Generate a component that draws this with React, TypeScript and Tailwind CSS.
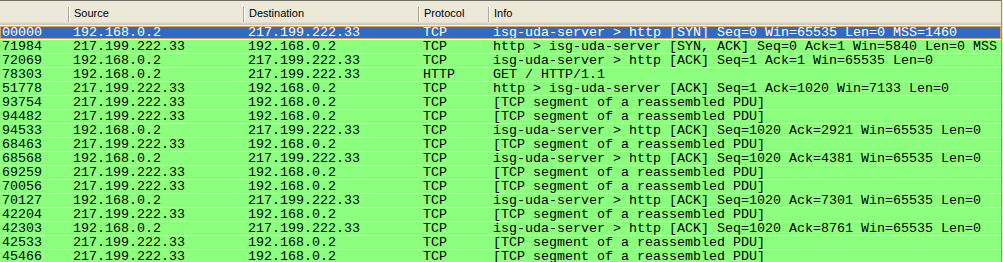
const SEG = '[TCP segment of a reassembled PDU]';
const A = '192.168.0.2';
const B = '217.199.222.33';

type Packet = { no: string; src: string; dst: string; proto: string; info: string };

const packets: Packet[] = [
  { no: '00000', src: A, dst: B, proto: 'TCP', info: 'isg-uda-server > http [SYN] Seq=0 Win=65535 Len=0 MSS=1460' },
  { no: '71984', src: B, dst: A, proto: 'TCP', info: 'http > isg-uda-server [SYN, ACK] Seq=0 Ack=1 Win=5840 Len=0 MSS' },
  { no: '72069', src: A, dst: B, proto: 'TCP', info: 'isg-uda-server > http [ACK] Seq=1 Ack=1 Win=65535 Len=0' },
  { no: '78303', src: A, dst: B, proto: 'HTTP', info: 'GET / HTTP/1.1' },
  { no: '51778', src: B, dst: A, proto: 'TCP', info: 'http > isg-uda-server [ACK] Seq=1 Ack=1020 Win=7133 Len=0' },
  { no: '93754', src: B, dst: A, proto: 'TCP', info: SEG },
  { no: '94482', src: B, dst: A, proto: 'TCP', info: SEG },
  { no: '94533', src: A, dst: B, proto: 'TCP', info: 'isg-uda-server > http [ACK] Seq=1020 Ack=2921 Win=65535 Len=0' },
  { no: '68463', src: B, dst: A, proto: 'TCP', info: SEG },
  { no: '68568', src: A, dst: B, proto: 'TCP', info: 'isg-uda-server > http [ACK] Seq=1020 Ack=4381 Win=65535 Len=0' },
  { no: '69259', src: B, dst: A, proto: 'TCP', info: SEG },
  { no: '70056', src: B, dst: A, proto: 'TCP', info: SEG },
  { no: '70127', src: A, dst: B, proto: 'TCP', info: 'isg-uda-server > http [ACK] Seq=1020 Ack=7301 Win=65535 Len=0' },
  { no: '42204', src: B, dst: A, proto: 'TCP', info: SEG },
  { no: '42303', src: A, dst: B, proto: 'TCP', info: 'isg-uda-server > http [ACK] Seq=1020 Ack=8761 Win=65535 Len=0' },
  { no: '42533', src: B, dst: A, proto: 'TCP', info: SEG },
  { no: '45466', src: B, dst: A, proto: 'TCP', info: SEG },
];

function HeaderCell({ label, width, first }: { label: string; width: string; first?: boolean }) {
  return (
    <div className={`${width} relative flex h-full shrink-0 items-center pl-[6px] pt-[4px]`}>
      {!first && (
        <div className="absolute left-0 top-[6px] flex h-[15px]">
          <div className="w-px bg-[#aca899]" />
          <div className="w-px bg-white" />
        </div>
      )}
      {label}
    </div>
  );
}

function Row({ p, selected }: { p: Packet; selected: boolean }) {
  const tone = selected
    ? 'bg-[#316ac5] text-white outline outline-1 -outline-offset-1 outline-[#d9a35a]'
    : 'bg-[#8dff7f] text-black';
  return (
    <div className="h-[14px] border-b border-white">
      <div className={`flex h-[13px] items-center leading-[13px] ${tone}`}>
        <div className="w-[68px] shrink-0 overflow-hidden pl-[2px]">{p.no}</div>
        <div className="w-[175px] shrink-0 overflow-hidden pl-[5px]">{p.src}</div>
        <div className="w-[175px] shrink-0 overflow-hidden pl-[5px]">{p.dst}</div>
        <div className="w-[70px] shrink-0 overflow-hidden pl-[5px]">{p.proto}</div>
        <div className="flex-1 overflow-hidden pl-[5px]">{p.info}</div>
      </div>
    </div>
  );
}

export default function App() {
  return (
    <div className="flex h-[262px] w-[1003px] overflow-hidden bg-white">
      <div className="w-[1001px] shrink-0 overflow-hidden">
        <div className="border-t border-[#716f64]">
          <div className="flex h-[21px] bg-[#ece9d8] font-['Liberation_Sans',Arial,sans-serif] text-[11px] text-black">
            <HeaderCell label="" width="w-[68px]" first />
            <HeaderCell label="Source" width="w-[175px]" />
            <HeaderCell label="Destination" width="w-[175px]" />
            <HeaderCell label="Protocol" width="w-[70px]" />
            <HeaderCell label="Info" width="flex-1" />
          </div>
          <div className="h-px bg-[#e2decd]" />
          <div className="h-px bg-[#d6d2c2]" />
          <div className="h-px bg-[#cbc7b8]" />
          <div className="h-px bg-white" />
        </div>
        <div className="whitespace-nowrap font-['Liberation_Mono','DejaVu_Sans_Mono',monospace] text-[13.333px]">
          {packets.map((p, i) => (
            <Row key={i} p={p} selected={i === 0} />
          ))}
        </div>
      </div>
      <div className="w-px bg-[#8e8f8f]" />
      <div className="w-px bg-[#ece9d8]" />
    </div>
  );
}
